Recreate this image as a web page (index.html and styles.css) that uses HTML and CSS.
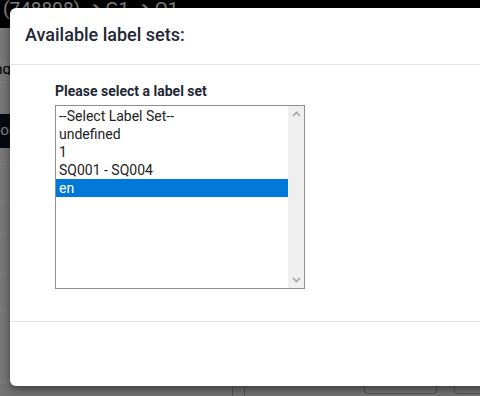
FILE: index.html
```html
<!DOCTYPE html>
<html>
<head>
<meta charset="utf-8">
<link rel="stylesheet" href="styles.css">
</head>
<body>
<div class="page">
  <div class="topbar"><span class="crumb">(748898) ➔ G1 ➔ Q1</span></div>
  <div class="rows">
    <div class="row r1"></div>
    <div class="row r2"><span class="tail">Setting</span></div>
    <div class="row r3"></div>
    <div class="row dark"><span class="lead">Routing</span></div>
    <div class="row r5"></div>
    <div class="row r6"></div>
    <div class="row r7"></div>
    <div class="row r8"></div>
    <div class="row r9"></div>
    <div class="row r10"></div>
  </div>
  <div class="bottombar">
    <div class="bcell c1"></div>
    <div class="bcell c2"></div>
    <div class="bbtn b1"></div>
    <div class="bbtn b2"></div>
  </div>
</div>
<div class="overlay"></div>
<div class="modal">
  <div class="modal-header">
    <h4 class="modal-title">Available label sets:</h4>
  </div>
  <div class="modal-body">
    <div class="field">
      <label class="field-label">Please select a label set</label>
      <div class="listbox" role="listbox">
        <div class="options">
          <div class="option">--Select Label Set--</div>
          <div class="option">undefined</div>
          <div class="option">1</div>
          <div class="option">SQ001 - SQ004</div>
          <div class="option selected">en</div>
        </div>
        <div class="scrollbar">
          <svg class="arrow" width="9" height="6" viewBox="0 0 9 6"><path d="M1 5 L4.5 1.5 L8 5" fill="none" stroke="#a3a3a3" stroke-width="1.6"/></svg>
          <svg class="arrow" width="9" height="6" viewBox="0 0 9 6"><path d="M1 1 L4.5 4.5 L8 1" fill="none" stroke="#a3a3a3" stroke-width="1.6"/></svg>
        </div>
      </div>
    </div>
  </div>
  <div class="modal-footer"></div>
</div>
</body>
</html>
```
FILE: styles.css
```css
* { box-sizing: border-box; }
html, body { margin: 0; padding: 0; }
body {
  width: 480px;
  height: 396px;
  overflow: hidden;
  font-family: Roboto, "Liberation Sans", sans-serif;
  background: #fff;
  position: relative;
}
.page { display: flex; flex-direction: column; height: 396px; }
.topbar {
  height: 28px;
  background: #000;
  color: #fff;
  font-size: 19px;
  line-height: 18px;
  padding-left: 3px;
  overflow: hidden;
  white-space: nowrap;
}
.crumb { display: block; }
.rows { flex: 1; display: flex; flex-direction: column; background: #f0f0f0; }
.row { border-bottom: 1px solid #fff; font-size: 15px; color: #000; overflow: hidden; white-space: nowrap; }
.tail { display: block; width: 11px; direction: rtl; overflow: hidden; }
.lead { display: block; margin-left: -9px; }
.r1 { height: 35px; }
.r2 { height: 20px; line-height: 12px; }
.r3 { height: 31px; border-bottom: none; }
.dark { height: 34px; background: #0a1222; color: #fff; line-height: 32px; border-bottom: none; }
.r5 { height: 16px; }
.r6 { height: 37px; }
.r7 { height: 33px; }
.r8 { height: 40px; }
.r9 { height: 37px; }
.r10 { flex: 1; border-bottom: none; }
.bottombar { height: 12px; display: flex; background: #e6e6e6; }
.bcell { height: 12px; border-left: 1px solid #aaa; flex: none; }
.c1 { margin-left: 232px; width: 12px; }
.c2 { width: 120px; }
.bbtn { height: 10px; border: 1px solid #aaa; border-top: none; border-radius: 0 0 4px 4px; flex: none; }
.b1 { width: 73px; }
.b2 { width: 40px; margin-left: 17px; }

.overlay {
  position: absolute;
  inset: 0;
  background: rgba(0, 0, 0, 0.5);
}
.modal {
  position: absolute;
  left: 10px;
  top: 8px;
  width: 520px;
  height: 378px;
  background: #fff;
  border-radius: 6px;
  box-shadow: 0 3px 9px rgba(0, 0, 0, 0.5);
  display: flex;
  flex-direction: column;
}
.modal-header {
  height: 57px;
  border-bottom: 1px solid #e5e5e5;
  padding: 0 15px;
  display: flex;
  align-items: center;
}
.modal-title {
  margin: 0;
  font-size: 18px;
  font-weight: 500;
  color: #1e2836;
  line-height: 20px;
  padding-bottom: 3px;
}
.modal-body {
  height: 257px;
  padding: 16px 0 0 45px;
  border-bottom: 1px solid #e5e5e5;
}
.field { display: flex; flex-direction: column; }
.field-label {
  font-size: 14px;
  font-weight: 700;
  color: #1e2836;
  line-height: 20px;
  margin-bottom: 4px;
}
.listbox {
  width: 250px;
  height: 184px;
  border: 1px solid #8b8e94;
  display: flex;
  background: #fff;
}
.options { flex: 1; padding-top: 1px; }
.option {
  height: 18px;
  line-height: 18px;
  font-size: 14px;
  color: #222;
  padding-left: 3px;
  white-space: nowrap;
}
.option.selected { background: #0078d7; color: #fff; }
.scrollbar {
  width: 16px;
  background: #efefef;
  display: flex;
  flex-direction: column;
  justify-content: space-between;
  align-items: center;
  padding: 5px 0 5px;
}
.modal-footer { flex: 1; }
```
